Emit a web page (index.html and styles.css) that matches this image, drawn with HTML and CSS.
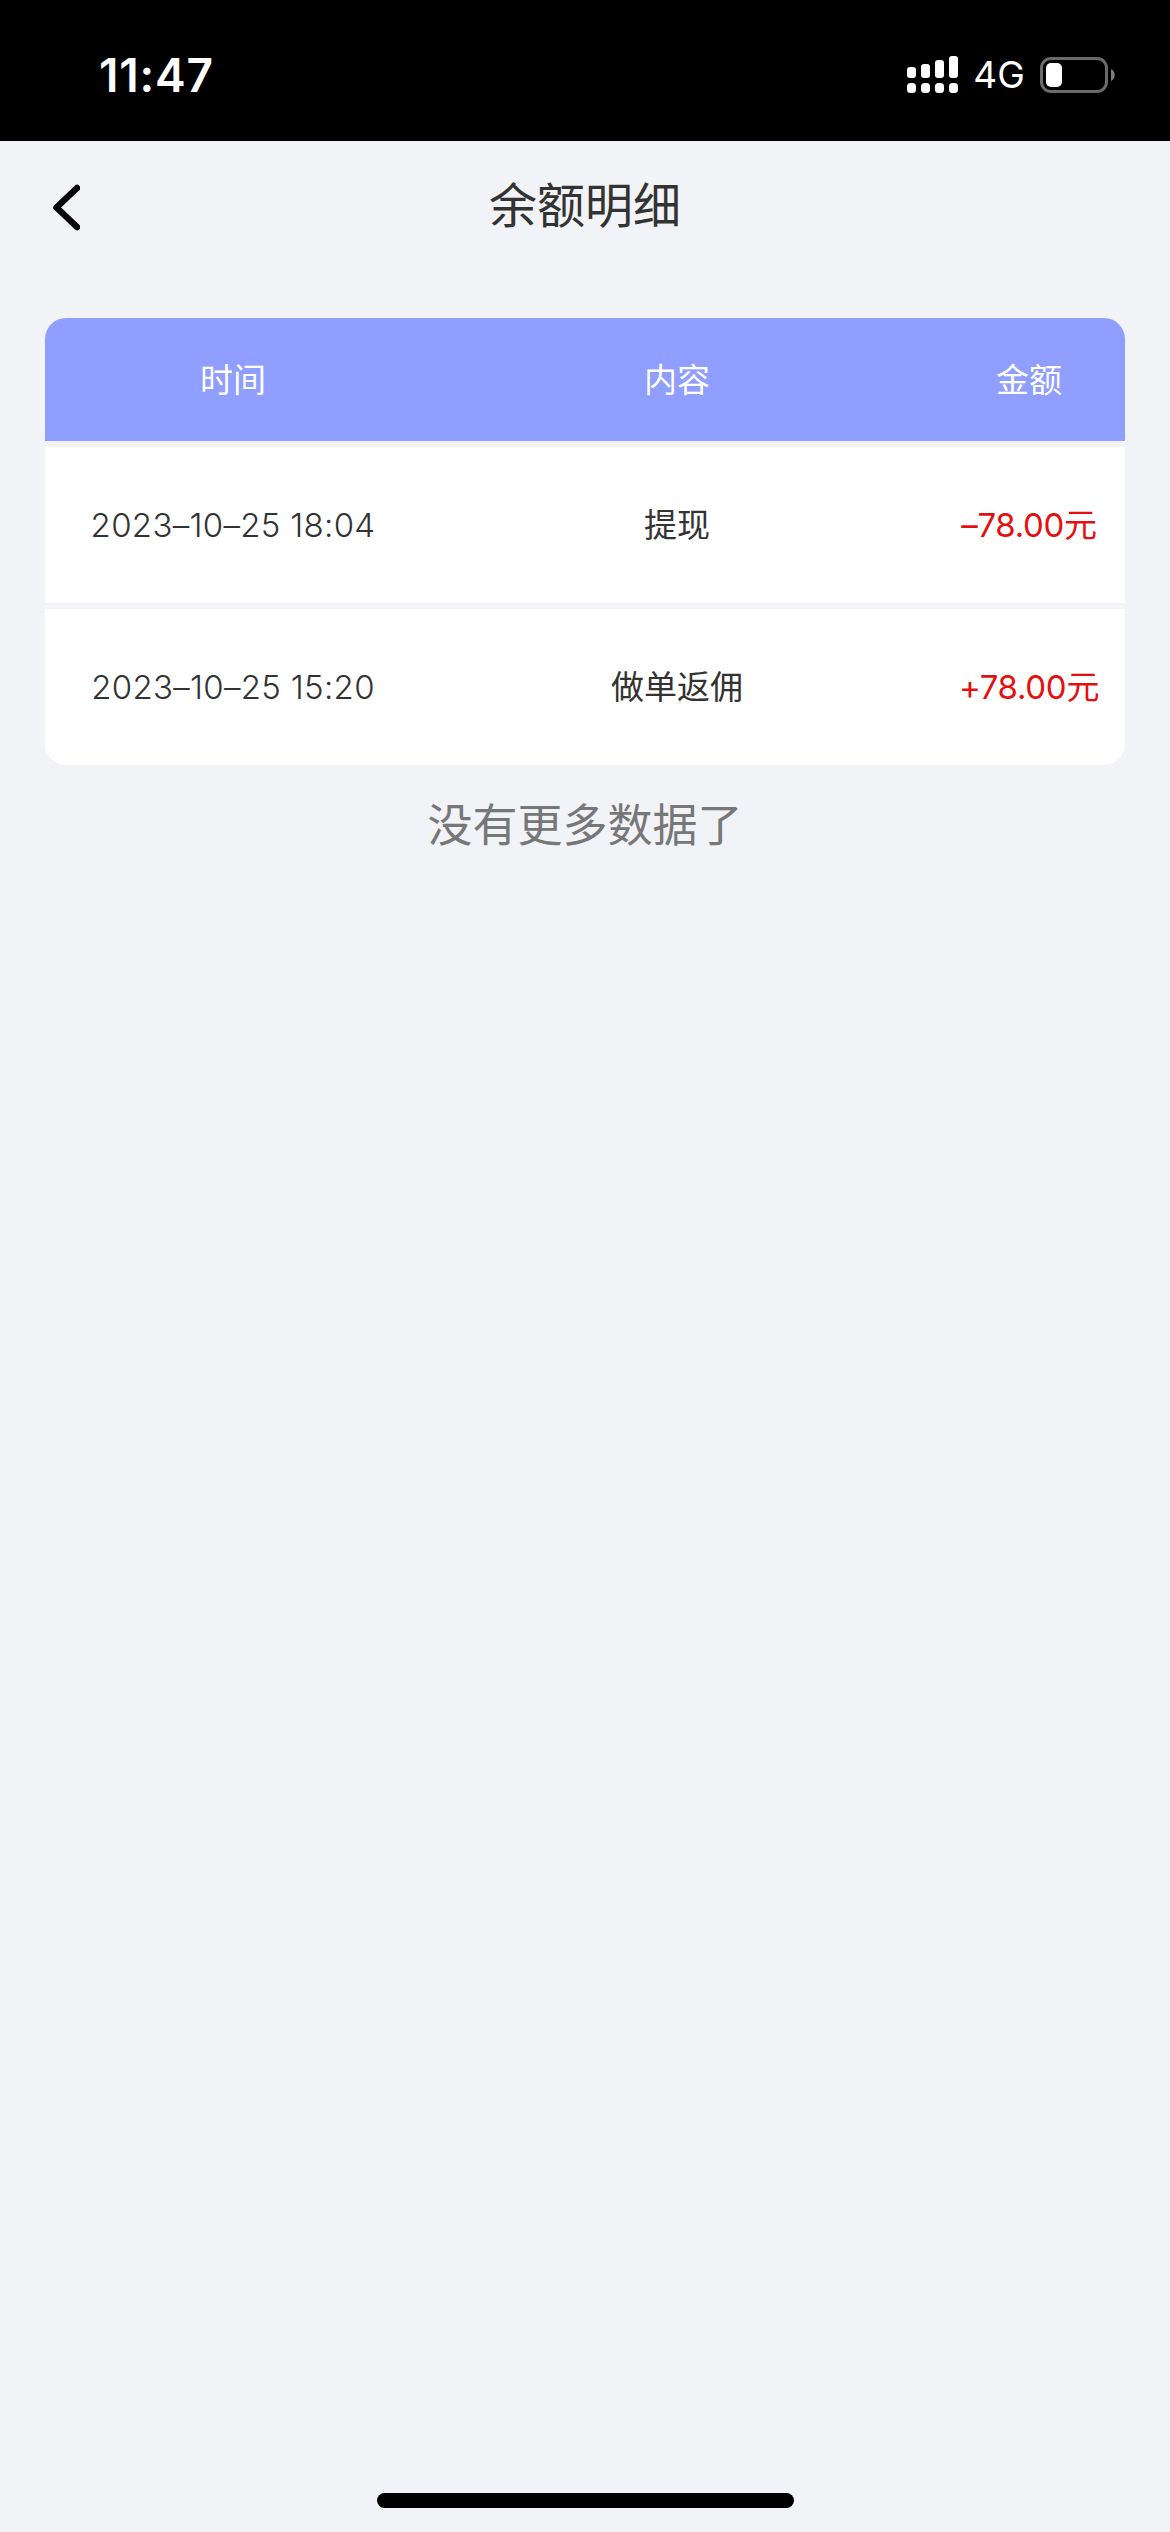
FILE: index.html
```html
<!DOCTYPE html>
<html lang="zh-CN">
<head>
  <meta charset="UTF-8">
  <meta name="viewport" content="width=device-width, initial-scale=1.0">
  <title>余额明细</title>
  <link rel="stylesheet" href="styles.css">
</head>
<body>
  <!-- Status bar -->
  <div class="status-bar">
    <span class="clock">11:47</span>
    <div class="status-right">
      <svg class="signal" width="51" height="37" viewBox="0 0 51 37" fill="#fff">
        <rect x="0" y="11" width="9" height="11" rx="3"/>
        <rect x="14" y="8" width="9" height="14" rx="3"/>
        <rect x="28" y="4" width="9" height="18" rx="3"/>
        <rect x="42" y="0" width="9" height="22" rx="3"/>
        <rect x="0" y="27" width="9" height="10" rx="3.5"/>
        <rect x="14" y="27" width="9" height="10" rx="3.5"/>
        <rect x="28" y="27" width="9" height="10" rx="3.5"/>
        <rect x="42" y="27" width="9" height="10" rx="3.5"/>
      </svg>
      <span class="network">4G</span>
      <svg class="battery" width="75" height="36" viewBox="0 0 75 36">
        <rect x="1.5" y="1.5" width="65" height="33" rx="9.5" fill="none" stroke="#6b6b6b" stroke-width="3"/>
        <rect x="6" y="6" width="16" height="24" rx="5" fill="#fff"/>
        <path d="M71 12c5 2 5 10 0 12z" fill="#7c7c7c"/>
      </svg>
    </div>
  </div>

  <!-- Page header -->
  <div class="nav">
    <svg class="back" width="30" height="48" viewBox="0 0 30 48">
      <path d="M27 5 6.500 24.500 27 44" fill="none" stroke="#050507" stroke-width="6.500" stroke-linecap="round" stroke-linejoin="round"/>
    </svg>
    <h1>余额明细</h1>
  </div>

  <!-- Balance records -->
  <div class="list">
    <div class="row head">
      <div>时间</div>
      <div>内容</div>
      <div>金额</div>
    </div>
    <div class="row">
      <div class="date">2023–10–25 18:04</div>
      <div>提现</div>
      <div class="amount">–78.00元</div>
    </div>
    <div class="row">
      <div class="date">2023–10–25 15:20</div>
      <div>做单返佣</div>
      <div class="amount">+78.00元</div>
    </div>
  </div>
  <p class="no-more">没有更多数据了</p>

  <div class="home-bar"></div>
</body>
</html>
```

FILE: styles.css
```css
* {
  box-sizing: border-box;
}

body {
  margin: 0;
  height: 2532px;
  display: flex;
  flex-direction: column;
  background-color: #f1f3f7;
  color: #333;
  font-family: Inter, "Noto Sans CJK SC", sans-serif;
  font-size: 33px;
  font-weight: 400;
}

/* Status bar */
.status-bar {
  height: 141px;
  padding: 8px 55px 0 99px;
  display: flex;
  justify-content: space-between;
  align-items: center;
  background-color: #000;
  color: #fff;
}

.clock {
  font-size: 46px;
  font-weight: 600;
  letter-spacing: 0.8px;
}

.status-right {
  display: flex;
  align-items: center;
}

.network {
  width: 82px;
  font-size: 37px;
  text-align: center;
}

/* Page header */
.nav {
  height: 132px;
  padding: 0 50px;
  display: grid;
  grid-template-columns: 30px 1fr 30px;
  align-items: center;
}

.nav h1 {
  margin: 0 0 2px;
  font-size: 48px;
  line-height: 60px;
  font-weight: 400;
  text-align: center;
}

/* Records */
.list {
  margin: 45px 45px 0;
  display: flex;
  flex-direction: column;
  gap: 6px;
  border-radius: 21px;
  overflow: hidden;
}

.row {
  height: 156px;
  display: grid;
  grid-template-columns: 376px 512px 192px;
  align-items: center;
  background-color: #fff;
  text-align: center;
  line-height: 45px;
  white-space: nowrap;
}

.head {
  height: 123px;
  padding-top: 2px;
  background-color: #8f9eff;
  color: #fff;
}

.date {
  font-weight: 300;
  letter-spacing: 0.3px;
}

.amount {
  color: #e4100f;
  letter-spacing: -0.3px;
}

.no-more {
  margin: 31px 0 0;
  color: #777;
  font-size: 45px;
  line-height: 60px;
  text-align: center;
}

.home-bar {
  width: 417px;
  height: 15px;
  margin: auto auto 24px;
  border-radius: 8px;
  background-color: #000;
}
```
